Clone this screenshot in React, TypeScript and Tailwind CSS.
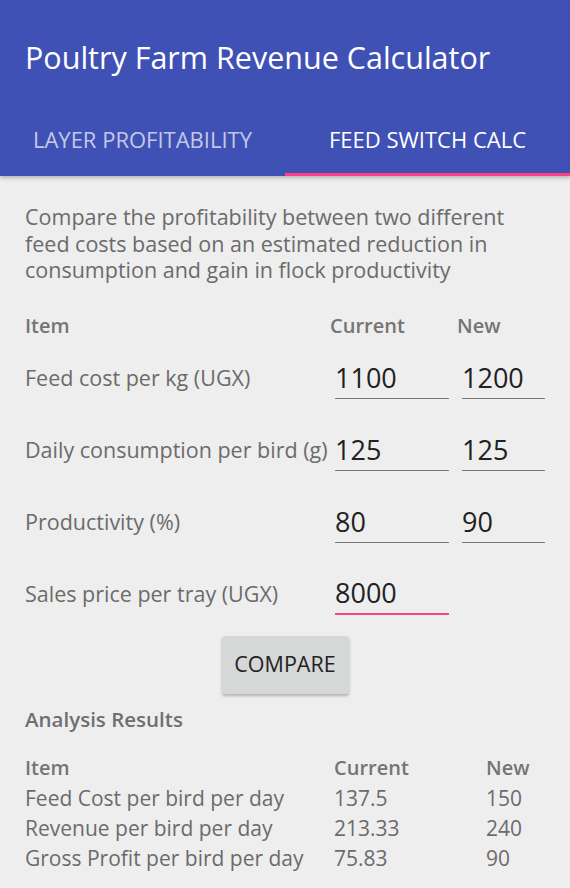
import React, { useState } from 'react';

const inputs = [
    { label: 'Feed cost per kg (UGX)', current: '1100', next: '1200' },
    { label: 'Daily consumption per bird (g)', current: '125', next: '125' },
    { label: 'Productivity (%)', current: '80', next: '90' },
];

const results = [
    { label: 'Feed Cost per bird per day', current: '137.5', next: '150' },
    { label: 'Revenue per bird per day', current: '213.33', next: '240' },
    { label: 'Gross Profit per bird per day', current: '75.83', next: '90' },
];

const App: React.FC = () => {
    const [tab, setTab] = useState<'layer' | 'feed'>('feed');

    return (
        <div className="w-[570px] h-[888px] bg-[#eeeeee] overflow-hidden font-['Open_Sans','Noto_Sans',sans-serif]">
            {/* App bar + tabs */}
            <div className="bg-[#3f51b5] shadow-[0_2px_4px_rgba(0,0,0,0.25)] relative">
                <div className="h-[114px] flex items-center px-[25px]">
                    <h1 className="text-white text-[30.5px] leading-none">Poultry Farm Revenue Calculator</h1>
                </div>
                <div className="flex h-[62px]">
                    <button
                        onClick={() => setTab('layer')}
                        className={`w-1/2 flex items-center justify-center pb-[8px] text-[22px] uppercase border-b-[3px] ${tab === 'layer' ? 'text-white border-[#ff4081]' : 'text-white/70 border-transparent'}`}
                    >
                        Layer Profitability
                    </button>
                    <button
                        onClick={() => setTab('feed')}
                        className={`w-1/2 flex items-center justify-center pb-[8px] text-[22px] uppercase border-b-[3px] ${tab === 'feed' ? 'text-white border-[#ff4081]' : 'text-white/70 border-transparent'}`}
                    >
                        Feed Switch Calc
                    </button>
                </div>
            </div>

            <div className="px-[25px]">
                <p className="pt-[28px] pr-[10px] text-[21.5px] leading-[26.5px] text-[#6b6b6b]">
                    Compare the profitability between two different feed costs based on an estimated reduction in consumption and gain in flock productivity
                </p>

                {/* Input table */}
                <div className="mt-[27px] grid grid-cols-[305px_127px_93px] h-[30px] items-center text-[20px] font-semibold text-[#757575]">
                    <span>Item</span>
                    <span>Current</span>
                    <span>New</span>
                </div>
                <div className="mt-[2px]">
                    {inputs.map((row) => (
                        <div key={row.label} className="grid grid-cols-[305px_127px_93px] h-[72px] items-center">
                            <span className="text-[21.5px] text-[#6b6b6b] whitespace-nowrap">{row.label}</span>
                            <div className="pl-[5px]">
                                <div className="w-[114px] h-[40px] flex items-center border-b-[1.5px] border-[#777777] text-[27px] text-[#212121]">
                                    {row.current}
                                </div>
                            </div>
                            <div className="pl-[5px]">
                                <div className="w-[83px] h-[40px] flex items-center border-b-[1.5px] border-[#777777] text-[27px] text-[#212121]">
                                    {row.next}
                                </div>
                            </div>
                        </div>
                    ))}
                    <div className="grid grid-cols-[305px_127px_93px] h-[72px] items-center">
                        <span className="text-[21.5px] text-[#6b6b6b] whitespace-nowrap">Sales price per tray (UGX)</span>
                        <div className="pl-[5px]">
                            <div className="w-[114px] h-[40px] flex items-center border-b-2 border-[#ff4081] text-[27px] text-[#212121]">
                                8000
                            </div>
                        </div>
                    </div>
                </div>

                <div className="mt-[5px] flex justify-center">
                    <button className="w-[127px] h-[58px] bg-[#d6d7d7] rounded-[3px] shadow-[0_2px_3px_rgba(0,0,0,0.25)] text-[21.5px] text-[#222222] uppercase">
                        Compare
                    </button>
                </div>

                {/* Results */}
                <h2 className="mt-[12px] text-[20.5px] leading-[26px] font-semibold text-[#6f6f6f]">Analysis Results</h2>
                <div className="mt-[21px] text-[21px] leading-[30px] text-[#6b6b6b]">
                    <div className="grid grid-cols-[309px_152px_60px] text-[20px] font-semibold text-[#757575]">
                        <span>Item</span>
                        <span>Current</span>
                        <span>New</span>
                    </div>
                    {results.map((row) => (
                        <div key={row.label} className="grid grid-cols-[309px_152px_60px]">
                            <span className="whitespace-nowrap">{row.label}</span>
                            <span>{row.current}</span>
                            <span>{row.next}</span>
                        </div>
                    ))}
                </div>
            </div>
        </div>
    );
};

export default App;
